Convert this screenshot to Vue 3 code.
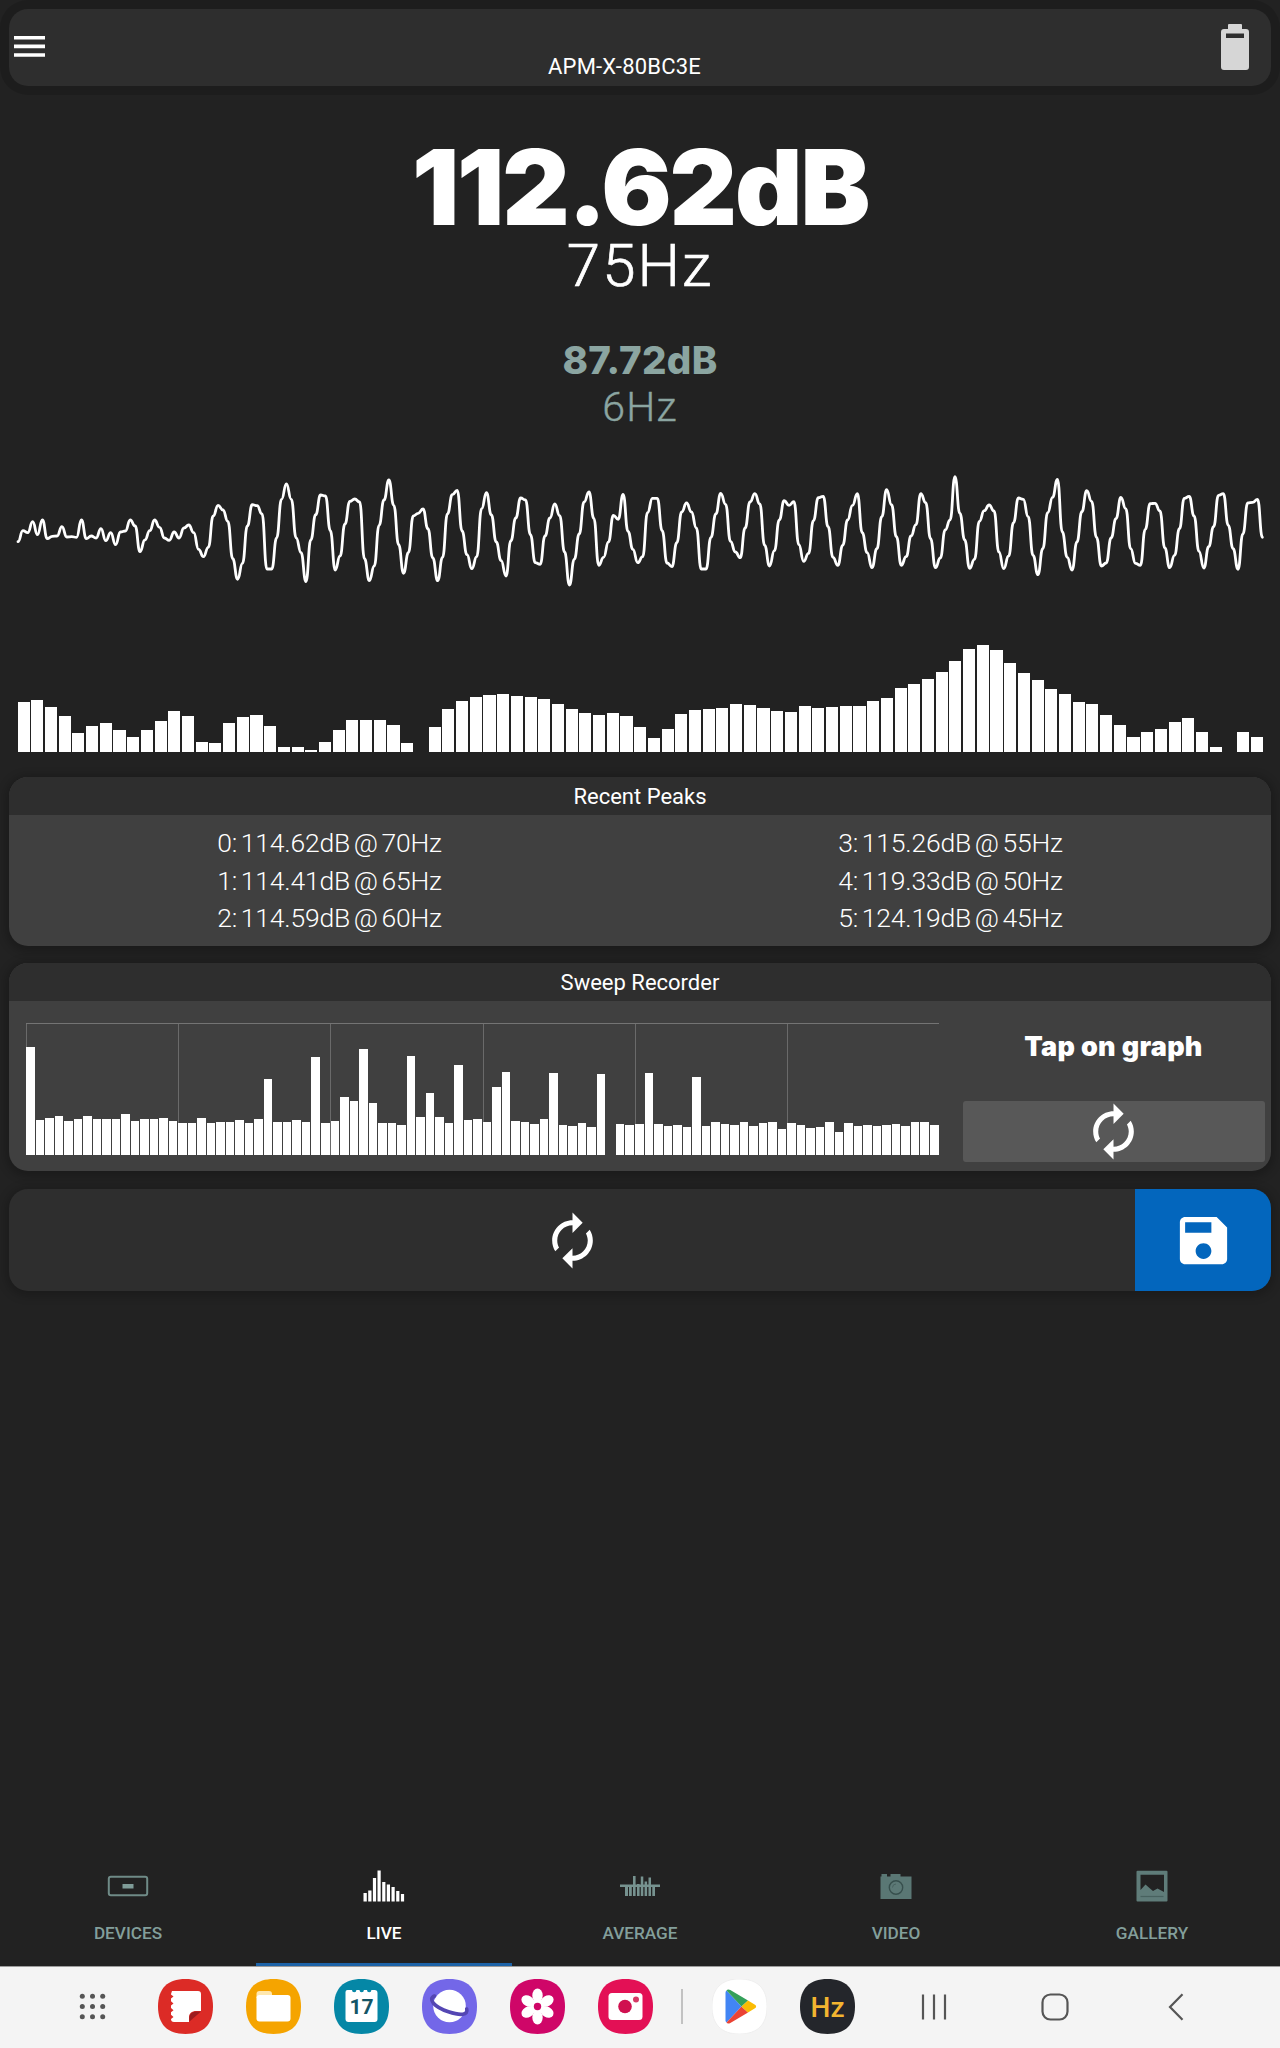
<template>
  <div class="screen">

    <!-- Top bar -->
    <header class="topbar">
      <svg class="menu-icon" width="31" height="21" viewBox="0 0 31 21">
        <path d="M0 0h31v3.6H0zM0 8.6h31v3.6H0zM0 17.2h31v3.6H0z" fill="#fff" />
      </svg>
      <span class="device-name">APM-X-80BC3E</span>
      <svg class="battery-icon" width="28" height="46" viewBox="0 0 28 46">
        <path
          fill="#d6d6d6"
          fill-rule="evenodd"
          d="M8 0h12a1 1 0 0 1 1 1v4h4a3 3 0 0 1 3 3v35a3 3 0 0 1-3 3H3a3 3 0 0 1-3-3V8a3 3 0 0 1 3-3h4V1a1 1 0 0 1 1-1zM5 9.500v4.500h18V9.500z"
        />
      </svg>
    </header>

    <!-- Current reading -->
    <section class="readout">
      <div class="level">112.62dB</div>
      <div class="freq">75Hz</div>
      <div class="level-alt">87.72dB</div>
      <div class="freq-alt">6Hz</div>
    </section>

    <!-- Waveform -->
    <svg class="wave" width="1280" height="140" viewBox="0 0 1280 140">
      <path :d="wavePath" fill="none" stroke="#fff" stroke-width="2.8" stroke-linecap="round" />
    </svg>

    <!-- Spectrum -->
    <div class="spectrum">
      <div v-for="(h, i) in spectrum" :key="i" class="bar" :style="{ height: h + 'px' }"></div>
    </div>

    <!-- Recent peaks -->
    <section class="card peaks">
      <h2 class="card-head">Recent Peaks</h2>
      <div class="peak-cols">
        <div v-for="(col, c) in peaks" :key="c" class="peak-col">
          <div v-for="p in col" :key="p">{{ p }}</div>
        </div>
      </div>
    </section>

    <!-- Sweep recorder -->
    <section class="card sweep">
      <h2 class="card-head">Sweep Recorder</h2>
      <div class="sweep-body">
        <div class="graph">
          <div class="grid-lines">
            <i v-for="n in 6" :key="n"></i>
          </div>
          <div class="sweep-bars">
            <div v-for="(h, i) in sweep" :key="i" class="bar" :style="{ height: h + 'px' }"></div>
          </div>
        </div>
        <div class="sweep-side">
          <div class="hint">Tap on graph</div>
          <button class="reset-btn">
            <svg width="61" height="61" viewBox="0 0 24 24"><path :d="renewPath" fill="#fff" /></svg>
          </button>
        </div>
      </div>
    </section>

    <!-- Actions -->
    <section class="actions">
      <button class="renew-btn">
        <svg width="61" height="61" viewBox="0 0 24 24"><path :d="renewPath" fill="#fff" /></svg>
      </button>
      <button class="save-btn">
        <svg width="63" height="63" viewBox="0 0 24 24">
          <path
            fill="#fff"
            d="M17 3H5c-1.110 0-2 .9-2 2v14c0 1.100.89 2 2 2h14c1.100 0 2-.9 2-2V7l-4-4zm-5 16c-1.660 0-3-1.340-3-3s1.340-3 3-3 3 1.340 3 3-1.340 3-3 3zm3-10H5V5h10v4z"
          />
        </svg>
      </button>
    </section>

    <!-- Tabs -->
    <nav class="tabs">
      <div class="tab">
        <svg width="42" height="34" viewBox="0 0 42 34">
          <rect x="1.800" y="7.800" width="38.400" height="18.400" rx="2" fill="none" stroke="#6f8b87" stroke-width="2" />
          <rect x="15.500" y="15" width="11" height="4.500" fill="#7f9c98" />
        </svg>
        <span>DEVICES</span>
      </div>
      <div class="tab active">
        <svg width="42" height="34" viewBox="0 0 42 34">
          <path
            fill="#fff"
            d="M.5 24h3.300v8.500H.5zM5.200 21.500h3.300v11H5.200zM9.900 9h3.200v23.500H9.900zM14.500 1.500h3.200v31h-3.200zM19.200 13h3.200v19.500h-3.200zM23.800 15.500H27v17h-3.200zM28.500 18h3.200v14.500h-3.200zM33.200 22h3.200v10.500h-3.200zM37.900 25h3.200v7.500h-3.200z"
          />
        </svg>
        <span>LIVE</span>
      </div>
      <div class="tab">
        <svg width="42" height="34" viewBox="0 0 42 34">
          <path
            fill="#76928f"
            d="M1 15.500h40v2.600H1zM6 16h3v11H6zM10 16h2.800v11H10zM14 7h2.600v20H14zM18 15h2.600v12H18zM21.800 7.500h2.500V27h-2.500zM25.600 12.500h2.500V27h-2.500zM29.500 8.500H32V27h-2.500zM33.300 16H36v11h-2.700z"
          />
        </svg>
        <span>AVERAGE</span>
      </div>
      <div class="tab">
        <svg width="42" height="34" viewBox="0 0 42 34">
          <path fill="#5a7774" d="M5.500 7.500h1V5H12v2.500h3.500V5h10v2.500h11V30h-31z" />
          <circle cx="21" cy="18.500" r="6.700" fill="#5c7976" stroke="#374f4d" stroke-width="1.400" />
          <path d="M17.500 18.500a3.600 3.600 0 0 1 3.500-3.500" fill="none" stroke="#486260" stroke-width="1" />
        </svg>
        <span>VIDEO</span>
      </div>
      <div class="tab">
        <svg width="42" height="34" viewBox="0 0 42 34">
          <path
            fill="#5f7c79"
            fill-rule="evenodd"
            d="M6.500 1.800h29a1 1 0 0 1 1 1v28.700a1 1 0 0 1-1 1h-29a1 1 0 0 1-1-1V2.800a1 1 0 0 1 1-1zM9.500 5.800V21l5-5.500 4.500 4 3 2.500 4.500-2.500 6.500 3.500V5.800z"
          />
          <path d="M9.500 27.500h23" stroke="#48625f" stroke-width="1.200" />
        </svg>
        <span>GALLERY</span>
      </div>
    </nav>

    <!-- System taskbar -->
    <footer class="taskbar">
      <svg class="all-apps" width="27" height="27" viewBox="0 0 27 27" fill="#555">
        <template v-for="y in 3" :key="y">
          <circle v-for="x in 3" :key="x" :cx="x * 10.2 - 6.900" :cy="y * 10.2 - 6.900" r="2.500" />
        </template>
      </svg>

      <div class="apps">
        <!-- Notes -->
        <svg class="app" viewBox="0 0 55 55">
          <path :d="squircle" fill="#dc2b26" />
          <path
            fill="#fff"
            d="M14 12h26a3 3 0 0 1 3 3v17h-4.500c-5 0-7.500 2.500-7.500 6.500V43H16a3 3 0 0 1-3-3l2.500-2-2.500-2.200v-2.600l2.500-2-2.500-2.200v-2.600l2.500-2-2.500-2.200v-2.600l2.500-2-2.500-2.200V15z"
          />
          <path fill="#9c1c1f" d="M43 32.500 31.500 42.500c-1-6.500 1.500-10 7-10z" />
        </svg>
        <!-- Files -->
        <svg class="app" viewBox="0 0 55 55">
          <path :d="squircle" fill="#f5a400" />
          <path fill="#ffe7ad" d="M10.500 15a3 3 0 0 1 3-3H23a3 3 0 0 1 3 3v4H10.500z" />
          <rect x="10.500" y="16" width="34" height="26.500" rx="3" fill="#fff" />
        </svg>
        <!-- Calendar -->
        <svg class="app" viewBox="0 0 55 55">
          <path :d="squircle" fill="#0587a6" />
          <path
            fill="#fff"
            d="M13.500 11H18a2.200 2.200 0 0 0 4.400 0h3.100a2.200 2.200 0 0 0 4.400 0H33a2.200 2.200 0 0 0 4.400 0h3.100a3 3 0 0 1 3 3v26a3 3 0 0 1-3 3h-26a3 3 0 0 1-3-3V13a2 2 0 0 1 2-2z"
          />
          <text class="cal-day" x="27.500" y="35">17</text>
        </svg>
        <!-- Browser -->
        <svg class="app" viewBox="0 0 55 55">
          <path :d="squircle" fill="#7367e8" />
          <circle cx="27.500" cy="27" r="16.300" fill="#fff" />
          <path
            d="M12.500 17c-7 3-.5 11 14 15.800 12 4 20 3.500 18.200-2.800"
            fill="none"
            stroke="#5446b3"
            stroke-width="3.600"
            stroke-linecap="round"
          />
        </svg>
        <!-- Gallery -->
        <svg class="app" viewBox="0 0 55 55">
          <path :d="squircle" fill="#cf0668" />
          <g fill="#fff">
            <ellipse v-for="a in 6" :key="a" cx="27.500" cy="16.500" rx="5.200" ry="7" :transform="`rotate(${a * 60} 27.5 27.5)`" />
            <circle cx="27.500" cy="27.500" r="7" />
          </g>
          <circle cx="27.500" cy="27.500" r="3.700" fill="#cf0668" />
        </svg>
        <!-- Camera -->
        <svg class="app" viewBox="0 0 55 55">
          <path :d="squircle" fill="#e31055" />
          <rect x="10.500" y="14" width="34" height="27" rx="3.500" fill="#fff" />
          <circle cx="27" cy="27.500" r="6.800" fill="#d01050" />
          <circle cx="38" cy="20.500" r="3" fill="#d63a66" />
        </svg>
      </div>

      <i class="divider"></i>

      <div class="apps">
        <!-- Play -->
        <svg class="app" viewBox="0 0 55 55">
          <path :d="squircle" fill="#fff" stroke="#ececec" stroke-width=".8" />
          <path fill="#4285f4" d="M14.500 11.500 29.500 27.500 14.500 43.500c-.7-.6-1-1.300-1-2.200V13.700c0-.8.400-1.600 1-2.200z" />
          <path fill="#34a05a" d="M14.500 11.500c.8-1.300 2.200-1.400 3.800-.4L36 21.500l-6.500 6z" />
          <path fill="#ea4335" d="M14.500 43.500c.8 1.300 2.200 1.300 3.800.4L36 33.500l-6.500-6z" />
          <path fill="#fbbc04" d="m36 21.500 7 4.200c1.500.9 1.500 2.700 0 3.600l-7 4.200-6.500-6z" />
        </svg>
        <!-- Spectrum app -->
        <svg class="app" viewBox="0 0 55 55">
          <path :d="squircle" fill="#24262b" />
          <text class="hz" x="27.500" y="37.500">Hz</text>
        </svg>
      </div>

      <svg class="nav-recents" width="26" height="28" viewBox="0 0 26 28">
        <path d="M2 1.500v25M13 1.500v25M24 1.500v25" stroke="#555" stroke-width="2.200" />
      </svg>
      <svg class="nav-home" width="28" height="28" viewBox="0 0 28 28">
        <rect x="1.500" y="1.500" width="25" height="25" rx="8" fill="none" stroke="#555" stroke-width="2.200" />
      </svg>
      <svg class="nav-back" width="16" height="28" viewBox="0 0 16 28">
        <path d="M14.500 1.200 2 14l12.500 12.800" fill="none" stroke="#555" stroke-width="2.200" />
      </svg>
    </footer>

  </div>
</template>

<script setup>
import { computed } from 'vue'

const renewPath =
  'M12 6v3l4-4-4-4v3c-4.420 0-8 3.580-8 8 0 1.570.46 3.030 1.240 4.260L6.700 14.800c-.45-.83-.7-1.790-.7-2.800 0-3.310 2.690-6 6-6zm6.760 1.740L17.300 9.200c.44.84.7 1.790.7 2.800 0 3.310-2.690 6-6 6v-3l-4 4 4 4v-3c4.420 0 8-3.580 8-8 0-1.570-.46-3.030-1.240-4.260z'
const squircle = 'M27.5 0C45.500 0 55 9.500 55 27.500S45.500 55 27.500 55 0 45.500 0 27.500 9.500 0 27.500 0z'

const peaks = [
  ['0: 114.62dB @ 70Hz', '1: 114.41dB @ 65Hz', '2: 114.59dB @ 60Hz'],
  ['3: 115.26dB @ 55Hz', '4: 119.33dB @ 50Hz', '5: 124.19dB @ 45Hz'],
]

// samples are stored in thirds of a pixel
const wave = [
  245, 212, 218, 185, 224, 180, 236, 229, 228, 200, 231, 230, 232, 180, 236, 228, 234, 206, 242, 218,
  254, 216, 213, 180, 198, 275, 240, 212, 180, 202, 234, 241, 216, 234, 204, 195, 218, 268, 290, 262,
  168, 136, 150, 184, 296, 358, 310, 198, 134, 137, 162, 327, 327, 234, 118, 72, 118, 234, 278, 365,
  240, 164, 105, 108, 212, 330, 288, 192, 124, 117, 126, 296, 362, 318, 196, 120, 60, 136, 254, 340,
  278, 168, 160, 147, 206, 294, 362, 292, 162, 104, 91, 213, 284, 326, 290, 146, 98, 165, 246, 302,
  348, 242, 174, 114, 120, 224, 308, 313, 228, 174, 132, 167, 276, 375, 298, 222, 126, 96, 175, 316,
  292, 246, 166, 178, 103, 214, 268, 308, 290, 158, 115, 115, 212, 309, 320, 248, 156, 129, 156, 204,
  327, 327, 232, 162, 100, 133, 244, 276, 293, 204, 126, 101, 132, 256, 318, 272, 180, 122, 136, 125,
  254, 304, 280, 182, 113, 109, 200, 292, 316, 256, 180, 136, 101, 218, 278, 323, 266, 170, 89, 134,
  230, 316, 290, 228, 194, 101, 128, 236, 323, 294, 210, 180, 50, 160, 240, 325, 298, 184, 152, 135,
  153, 276, 326, 288, 188, 114, 118, 170, 286, 344, 266, 158, 112, 58, 216, 292, 330, 246, 155, 92,
  124, 232, 318, 309, 234, 176, 112, 146, 266, 310, 316, 208, 131, 130, 153, 264, 323, 286, 206, 115,
  109, 168, 274, 324, 260, 200, 106, 101, 196, 266, 328, 222, 129, 127, 118, 232,
]

const wavePath = computed(() => {
  const step = 4.88
  let d = `M18 ${(wave[0] / 3).toFixed(1)}`
  for (let i = 1; i < wave.length; i++) {
    const x = 18 + i * step
    const mid = (x - step / 2).toFixed(2)
    const y0 = (wave[i - 1] / 3).toFixed(1)
    const y1 = (wave[i] / 3).toFixed(1)
    d += `C${mid} ${y0} ${mid} ${y1} ${x.toFixed(2)} ${y1}`
  }
  return d
})

const spectrum = [
  727, 721, 740, 769, 820, 799, 789, 811, 832, 811, 784, 754, 768, 846, 848, 788, 772, 766, 799, 860,
  860, 870, 846, 811, 781, 781, 780, 794, 848, 876, 801, 748, 724, 711, 706, 703, 708, 712, 717, 732,
  748, 758, 765, 760, 769, 801, 834, 807, 762, 750, 748, 743, 732, 735, 745, 752, 755, 737, 745, 741,
  739, 737, 723, 714, 684, 673, 656, 637, 603, 567, 556, 571, 610, 640, 660, 688, 701, 725, 731, 766,
  795, 831, 816, 807, 787, 773, 816, 860, 876, 816, 831,
].map((y) => (876 - y) / 3)

const sweep = [
  829, 1048, 1043, 1037, 1051, 1047, 1036, 1046, 1046, 1046, 1030, 1053, 1046, 1046, 1044, 1053, 1057,
  1057, 1042, 1057, 1055, 1056, 1048, 1059, 1045, 927, 1056, 1054, 1050, 1054, 861, 1059, 1052, 979,
  991, 836, 998, 1057, 1058, 1063, 857, 1040, 968, 1039, 1057, 884, 1050, 1046, 1056, 949, 906, 1051,
  1055, 1062, 1046, 909, 1065, 1068, 1058, 1070, 910, 1153, 1062, 1064, 1062, 909, 1062, 1067, 1063,
  1069, 920, 1067, 1056, 1060, 1063, 1056, 1067, 1059, 1056, 1077, 1058, 1065, 1074, 1071, 1054, 1084,
  1057, 1066, 1063, 1067, 1065, 1060, 1066, 1056, 1055, 1063,
].map((y) => (1153 - y) / 3)
</script>

<style>
body {
  background: #222;
}
</style>

<style scoped>
.screen {
  width: 1280px;
  height: 2048px;
  display: flex;
  flex-direction: column;
  overflow: hidden;
  background: #222;
  color: #fff;
  font-family: Roboto, "Liberation Sans", sans-serif;
}

svg {
  display: block;
  flex-shrink: 0;
}

button {
  border: 0;
  padding: 0;
  display: flex;
  align-items: center;
  justify-content: center;
}

/* ── top bar ── */
.topbar {
  height: 76.500px;
  margin: 9px 9px 0;
  box-sizing: border-box;
  padding: 0 22px 0 5px;
  display: flex;
  align-items: flex-start;
  justify-content: space-between;
  background: #2e2e2e;
  border-radius: 19px;
  box-shadow: 0 0 0 9px rgba(0, 0, 0, 0.14);
}

.menu-icon { margin-top: 27px; }
.battery-icon { margin-top: 15px; }

.device-name {
  margin-top: 46px;
  margin-right: 17px;
  font-size: 22px;
  line-height: 24px;
  letter-spacing: 0.2px;
}

/* ── readout ── */
.readout {
  margin-top: 59.500px;
  height: 315px;
  text-align: center;
}

.level {
  font-family: Inter, sans-serif;
  font-weight: 900;
  font-size: 104.500px;
  line-height: 84px;
  letter-spacing: -2.100px;
}

.freq {
  font-weight: 300;
  font-size: 60px;
  line-height: 74px;
  letter-spacing: 2px;
  -webkit-text-stroke: 0.700px #fff;
}

.level-alt {
  margin-top: 37px;
  color: #8ba5a1;
  font-weight: 800;
  font-family: Inter, sans-serif;
  font-size: 38.500px;
  line-height: 40px;
  letter-spacing: 0.300px;
}

.freq-alt {
  color: #8ba5a1;
  font-weight: 300;
  font-size: 41px;
  line-height: 54px;
  letter-spacing: 1.300px;
  -webkit-text-stroke: 0.400px #8ba5a1;
}

/* ── charts ── */
.spectrum {
  height: 110px;
  margin: 42px 17.500px 0 17.500px;
  display: flex;
  align-items: flex-end;
  gap: 1.600px;
}

.bar {
  flex: 1;
  background: #fff;
}

/* ── cards ── */
.card {
  margin: 0 9px;
  border-radius: 19px;
  overflow: hidden;
  background: #404040;
  box-shadow: 0 2px 9px 4px rgba(0, 0, 0, 0.2);
}

.card-head {
  margin: 0;
  height: 38px;
  background: #2e2e2e;
  text-align: center;
  font-size: 22px;
  font-weight: 400;
  line-height: 39px;
}

.peaks {
  margin-top: 25px;
  height: 168.500px;
}

.peak-cols {
  display: flex;
  padding: 9px 10px 0;
}

.peak-col {
  flex: 1;
  text-align: center;
  font-size: 26.500px;
  font-weight: 300;
  line-height: 37.700px;
  letter-spacing: -0.200px;
  word-spacing: -2.500px;
}

.sweep {
  margin-top: 17.500px;
  height: 208px;
}

.sweep-body {
  display: flex;
  padding: 21.500px 6.500px 0 17px;
}

.graph {
  width: 913px;
  height: 132px;
  display: flex;
}

.grid-lines {
  width: 100%;
  flex-shrink: 0;
  display: flex;
  border-top: 1.500px solid #747474;
}

.grid-lines i {
  flex: 1;
  border-left: 1px solid #6a6a6a;
}

.sweep-bars {
  width: 913px;
  flex-shrink: 0;
  margin-left: -913px;
  display: flex;
  align-items: flex-end;
  gap: 1px;
}

.sweep-side {
  flex: 1;
  margin-left: 23.500px;
  display: flex;
  flex-direction: column;
}

.hint {
  margin-top: 6px;
  height: 72.500px;
  text-align: center;
  font-family: Inter, sans-serif;
  font-size: 27px;
  font-weight: 900;
  line-height: 36px;
  letter-spacing: 0.300px;
}

.reset-btn {
  height: 60.500px;
  background: #585858;
  border-radius: 3px;
}

/* ── actions ── */
.actions {
  margin: 18px 9px 0;
  height: 102px;
  display: flex;
  border-radius: 19px;
  overflow: hidden;
  background: #2e2e2e;
  box-shadow: 0 2px 9px 4px rgba(0, 0, 0, 0.18);
}

.renew-btn {
  flex: 1;
  background: none;
}

.save-btn {
  width: 136px;
  background: #0366bd;
}

/* ── tabs ── */
.tabs {
  margin-top: auto;
  height: 103px;
  display: flex;
}

.tab {
  flex: 1;
  box-sizing: border-box;
  padding-top: 6px;
  display: flex;
  flex-direction: column;
  align-items: center;
  color: #839f9b;
  font-size: 17.200px;
  font-weight: 500;
  line-height: 20px;
}

.tab span { margin-top: 19.500px; }

.tab.active {
  color: #fff;
  border-bottom: 3px solid #1d63a8;
}

/* ── taskbar ── */
.taskbar {
  height: 82px;
  box-sizing: border-box;
  border-top: 1px solid #9c9c9c;
  padding: 0 0 2px 79px;
  display: flex;
  align-items: center;
  background: #f4f4f4;
}

.apps {
  display: flex;
  gap: 33px;
}

.app {
  width: 55px;
  height: 55px;
}

.all-apps { margin-right: 52px; }

.divider {
  width: 2px;
  height: 35px;
  margin: 0 28.500px 0 28px;
  background: #c2c2c2;
}

.cal-day {
  font-size: 21px;
  font-weight: 700;
  text-anchor: middle;
  fill: #155566;
}

.hz {
  font-size: 28px;
  font-weight: 500;
  text-anchor: middle;
  fill: #f3b530;
}

.nav-recents { margin-left: 66px; }
.nav-home { margin-left: 94px; }
.nav-back { margin-left: 99px; }
</style>
